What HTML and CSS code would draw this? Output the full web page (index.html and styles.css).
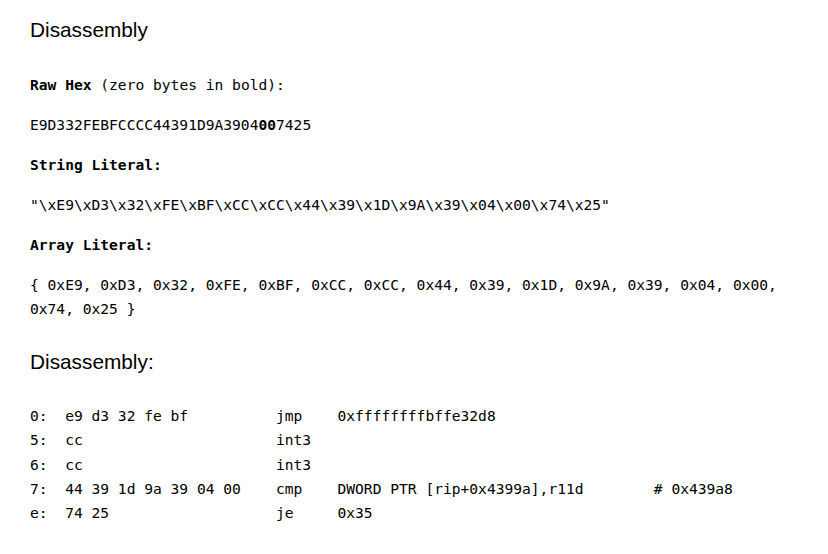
FILE: index.html
```html
<!DOCTYPE html>
<html>
<head>
<meta charset="utf-8">
<link rel="stylesheet" href="styles.css">
</head>
<body>
<main class="page">
  <h1 class="title">Disassembly</h1>
  <p class="mono"><b>Raw Hex</b> (zero bytes in bold):</p>
  <p class="mono">E9D332FEBFCCCC44391D9A3904<b>00</b>7425</p>
  <p class="mono"><b>String Literal:</b></p>
  <p class="mono">"\xE9\xD3\x32\xFE\xBF\xCC\xCC\x44\x39\x1D\x9A\x39\x04\x00\x74\x25"</p>
  <p class="mono"><b>Array Literal:</b></p>
  <p class="mono">{ 0xE9, 0xD3, 0x32, 0xFE, 0xBF, 0xCC, 0xCC, 0x44, 0x39, 0x1D, 0x9A, 0x39, 0x04, 0x00, 0x74, 0x25 }</p>
  <h2 class="subtitle">Disassembly:</h2>
  <pre class="disasm">0:  e9 d3 32 fe bf          jmp    0xffffffffbffe32d8
5:  cc                      int3
6:  cc                      int3
7:  44 39 1d 9a 39 04 00    cmp    DWORD PTR [rip+0x4399a],r11d        # 0x439a8
e:  74 25                   je     0x35</pre>
</main>
</body>
</html>
```
FILE: styles.css
```css
html, body {
  margin: 0;
  padding: 0;
  background: #fff;
  color: #000;
}

.page {
  padding: 18px 30px 0 30px;
}

.title,
.subtitle {
  font-family: "Liberation Sans", Arial, sans-serif;
  font-size: 20.8px;
  font-weight: normal;
  line-height: 24px;
  margin: 0;
}

.title {
  margin-bottom: 31px;
}

.subtitle {
  margin-top: 29px;
  margin-bottom: 30px;
}

.mono {
  font-family: "DejaVu Sans Mono", monospace;
  font-size: 14.6px;
  line-height: 24px;
  margin: 16px 0;
}

.mono b {
  font-weight: bold;
}

.disasm {
  font-family: "DejaVu Sans Mono", monospace;
  font-size: 14.6px;
  line-height: 24.25px;
  margin: 0;
}
```
